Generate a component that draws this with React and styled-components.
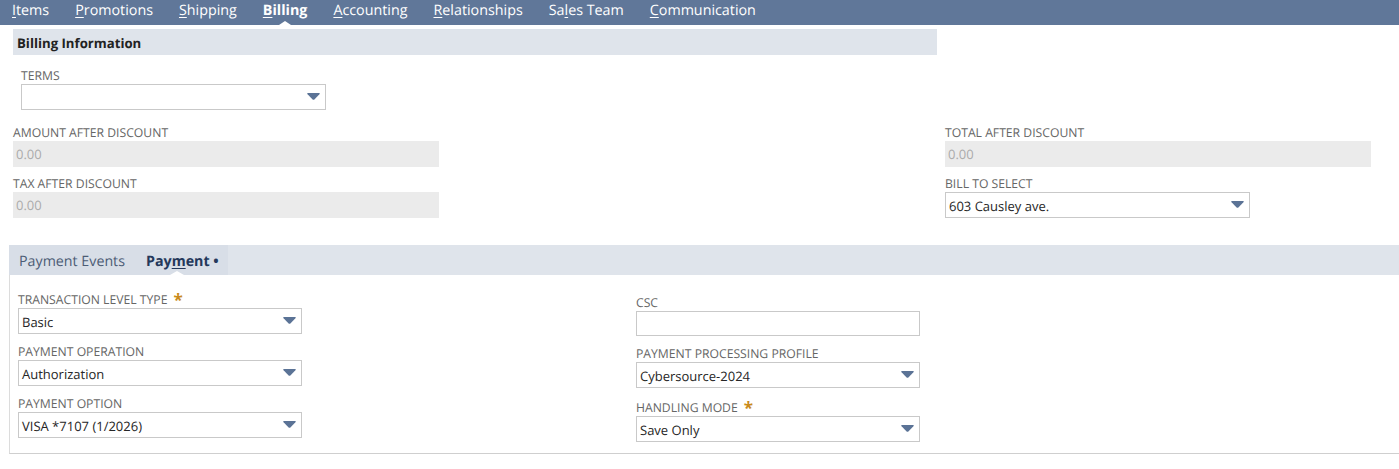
import React from "react";
import styled, { createGlobalStyle } from "styled-components";

const Global = createGlobalStyle`
  html, body { margin: 0; padding: 0; background: #fff; }
  body { font-family: "Open Sans", "Liberation Sans", sans-serif; color: #262626; text-rendering: geometricPrecision; }
`;
const Page = styled.div`width: 1399px; height: 469px; overflow: hidden; background: #fff;`;
const Nav = styled.nav`
  height: 25px; background: #607799; display: flex; align-items: center;
  gap: 26px; padding: 0 0 3px 12px; box-sizing: border-box;
`;
const NavItem = styled.span`
  position: relative; color: #fff; font-size: 14.3px; line-height: 20px;
  font-weight: ${p => (p.$active ? 700 : 400)};
  u { text-underline-offset: 2px; text-decoration-thickness: 1px; }
  ${p => p.$active && `
    &::after {
      content: ""; position: absolute; left: 50%; margin-left: -6px; bottom: -4px; width: 0; height: 0;
      border-left: 6px solid transparent; border-right: 6px solid transparent; border-bottom: 4px solid #fff;
    }
  `}
`;
const SectionWrap = styled.div`padding: 4px 0 0 13px;`;
const SectionTitle = styled.div`
  width: 924px; height: 26px; background: #dfe4eb; box-sizing: border-box; padding-left: 4px;
  font-size: 13.2px; font-weight: 700; line-height: 28px; color: #222;
`;
const TermsWrap = styled.div`padding: 12px 0 0 21px;`;
const Field = styled.div`display: flex; flex-direction: column; width: ${p => p.$w}px; margin-top: ${p => p.$top || 0}px;`;
const Label = styled.label`
  font-size: 12.2px; line-height: 16px; height: 17px; color: #666; white-space: nowrap;
  display: flex; align-items: center;
`;
const Star = styled.span`color: #c98a1b; font-size: 17px; font-weight: 700; margin: 1px 0 0 6px; line-height: 12px;`;
const Select = styled.div`
  height: 26px; box-sizing: border-box; border: 1px solid #c9c9c9; background: #fff;
  display: flex; align-items: center; justify-content: space-between; padding: 0 5px 0 3px;
  font-size: 13px; line-height: 18px; color: #262626;
  span { padding-top: 2px; }
  svg { display: block; margin-bottom: 1px; }
`;
const TextInput = styled.div`height: ${p => p.$h || 26}px; box-sizing: border-box; border: 1px solid #c9c9c9; background: #fff;`;
const Disabled = styled.div`
  height: 26px; box-sizing: border-box; background: #ebebeb; color: #ababab; font-size: 13px;
  display: flex; align-items: center; padding-left: 3px;
`;
const Totals = styled.div`display: flex; padding: 14px 0 0 13px; gap: 506px;`;
const Col = styled.div`display: flex; flex-direction: column;`;
const Tabs = styled.div`
  margin: 27px 0 0 9px; height: 30px; background: #dfe4eb; display: flex;
`;
const TabGroup = styled.div`
  display: flex; background: #d8dee7; width: 219px; box-sizing: border-box; padding-left: 10px; gap: 21px; align-items: center;
`;
const Tab = styled.span`
  position: relative; font-size: 14.25px; line-height: 20px; padding-top: 4px;
  color: ${p => (p.$active ? "#24385b" : "#4c5c75")};
  font-weight: ${p => (p.$active ? 700 : 400)};
  u { text-underline-offset: 2px; text-decoration-thickness: 1px; }
  ${p => p.$active && `
    &::after {
      content: ""; position: absolute; left: 24px; bottom: -3px; width: 0; height: 0;
      border-left: 7px solid transparent; border-right: 7px solid transparent; border-bottom: 4px solid #fff;
    }
  `}
`;
const Panel = styled.div`
  margin-left: 9px; height: 179px; box-sizing: border-box;
  border-left: 1px solid #dcdcdc; border-bottom: 1px solid #cfcfcf;
  display: flex; padding-left: 8px; gap: 334px;
`;
const PanelCol = styled.div`display: flex; flex-direction: column; padding-top: ${p => p.$top}px;`;

const Arrow = () => (
  <svg width="13" height="7" viewBox="0 0 13 7"><path d="M0.5 0 H12.5 Q13 0.5 12.4 1.3 L7.4 6.5 Q6.5 7.2 5.6 6.5 L0.6 1.3 Q0 0.5 0.5 0 Z" fill="#5b7396" /></svg>
);
const Drop = ({ children }) => (<Select><span>{children}</span><Arrow /></Select>);

export default function App() {
  return (
    <Page>
      <Global />
      <Nav>
        <NavItem><u>I</u>tems</NavItem>
        <NavItem><u>P</u>romotions</NavItem>
        <NavItem><u>S</u>hipping</NavItem>
        <NavItem $active><u>B</u>illing</NavItem>
        <NavItem><u>A</u>ccounting</NavItem>
        <NavItem><u>R</u>elationships</NavItem>
        <NavItem>Sa<u>l</u>es Team</NavItem>
        <NavItem><u>C</u>ommunication</NavItem>
      </Nav>
      <SectionWrap><SectionTitle>Billing Information</SectionTitle></SectionWrap>
      <TermsWrap>
        <Field $w={305}>
          <Label>TERMS</Label>
          <Drop />
        </Field>
      </TermsWrap>
      <Totals>
        <Col>
          <Field $w={426}><Label>AMOUNT AFTER DISCOUNT</Label><Disabled>0.00</Disabled></Field>
          <Field $w={426} $top={8}><Label>TAX AFTER DISCOUNT</Label><Disabled>0.00</Disabled></Field>
        </Col>
        <Col>
          <Field $w={426}><Label>TOTAL AFTER DISCOUNT</Label><Disabled>0.00</Disabled></Field>
          <Field $w={305} $top={8}><Label>BILL TO SELECT</Label><Drop>603 Causley ave.</Drop></Field>
        </Col>
      </Totals>
      <Tabs>
        <TabGroup>
          <Tab>Payment Events</Tab>
          <Tab $active>Pay<u>m</u>ent •</Tab>
        </TabGroup>
      </Tabs>
      <Panel>
        <PanelCol $top={16}>
          <Field $w={284}><Label>TRANSACTION LEVEL TYPE<Star>*</Star></Label><Drop>Basic</Drop></Field>
          <Field $w={284} $top={9}><Label>PAYMENT OPERATION</Label><Drop>Authorization</Drop></Field>
          <Field $w={284} $top={9}><Label>PAYMENT OPTION</Label><Drop>VISA *7107 (1/2026)</Drop></Field>
        </PanelCol>
        <PanelCol $top={19}>
          <Field $w={284}><Label>CSC</Label><TextInput $h={25} /></Field>
          <Field $w={284} $top={9}><Label>PAYMENT PROCESSING PROFILE</Label><Drop>Cybersource-2024</Drop></Field>
          <Field $w={284} $top={11}><Label>HANDLING MODE<Star>*</Star></Label><Drop>Save Only</Drop></Field>
        </PanelCol>
      </Panel>
    </Page>
  );
}
